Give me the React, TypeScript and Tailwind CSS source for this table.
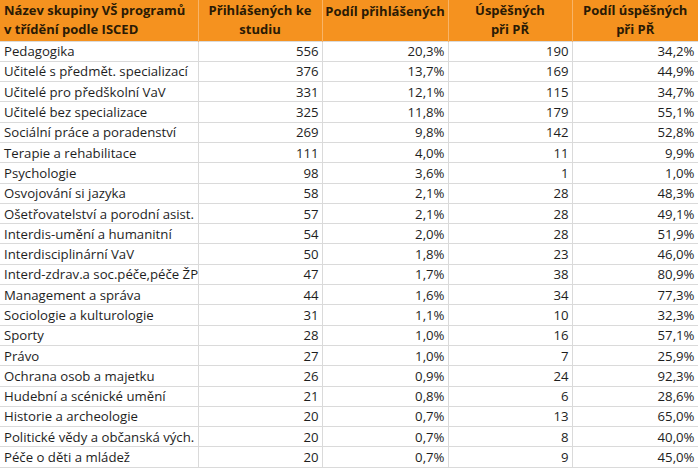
import React from "react";

const rows: [string, string, string, string, string][] = [
  ["Pedagogika", "556", "20,3%", "190", "34,2%"],
  ["Učitelé s předmět. specializací", "376", "13,7%", "169", "44,9%"],
  ["Učitelé pro předškolní VaV", "331", "12,1%", "115", "34,7%"],
  ["Učitelé bez specializace", "325", "11,8%", "179", "55,1%"],
  ["Sociální práce a poradenství", "269", "9,8%", "142", "52,8%"],
  ["Terapie a rehabilitace", "111", "4,0%", "11", "9,9%"],
  ["Psychologie", "98", "3,6%", "1", "1,0%"],
  ["Osvojování si jazyka", "58", "2,1%", "28", "48,3%"],
  ["Ošetřovatelství a porodní asist.", "57", "2,1%", "28", "49,1%"],
  ["Interdis-umění a humanitní", "54", "2,0%", "28", "51,9%"],
  ["Interdisciplinární VaV", "50", "1,8%", "23", "46,0%"],
  ["Interd-zdrav.a soc.péče,péče ŽP", "47", "1,7%", "38", "80,9%"],
  ["Management a správa", "44", "1,6%", "34", "77,3%"],
  ["Sociologie a kulturologie", "31", "1,1%", "10", "32,3%"],
  ["Sporty", "28", "1,0%", "16", "57,1%"],
  ["Právo", "27", "1,0%", "7", "25,9%"],
  ["Ochrana osob a majetku", "26", "0,9%", "24", "92,3%"],
  ["Hudební a scénické umění", "21", "0,8%", "6", "28,6%"],
  ["Historie a archeologie", "20", "0,7%", "13", "65,0%"],
  ["Politické vědy a občanská vých.", "20", "0,7%", "8", "40,0%"],
  ["Péče o děti a mládež", "20", "0,7%", "9", "45,0%"],
];

export default function App() {
  return (
    <div className="w-[698px] h-[469px] bg-white overflow-hidden" style={{ fontFamily: "'Open Sans', 'Noto Sans', sans-serif" }}>
      <table className="border-collapse table-fixed w-[698px] text-[13.2px] text-[#1e1e1e]">
        <colgroup>
          <col className="w-[198px]" />
          <col className="w-[124px]" />
          <col className="w-[126px]" />
          <col className="w-[124px]" />
          <col className="w-[126px]" />
        </colgroup>
        <thead>
          <tr className="h-[41px] bg-[#f5921f] text-[13px] font-bold text-[#2a1a05] leading-[19px]">
            <th className="text-left px-[4px] font-bold border-r border-[#f8b468]">Název skupiny VŠ programů<br />v třídění podle ISCED</th>
            <th className="text-center font-bold border-r border-[#f8b468]">Přihlášených ke<br />studiu</th>
            <th className="text-center align-top pt-[2px] font-bold border-r border-[#f8b468]">Podíl přihlášených</th>
            <th className="text-center font-bold border-r border-[#f8b468]">Úspěšných<br />při PŘ</th>
            <th className="text-center font-bold">Podíl úspěšných<br />při PŘ</th>
          </tr>
        </thead>
        <tbody>
          {rows.map((r, i) => (
            <tr key={i} className="h-[20.3px] leading-[18px]">
              <td className="px-[4px] border border-[#dadada] border-l-0 whitespace-nowrap">{r[0]}</td>
              <td className="px-[3px] text-right border border-[#dadada]">{r[1]}</td>
              <td className="px-[3px] text-right border border-[#dadada]">{r[2]}</td>
              <td className="px-[3px] text-right border border-[#dadada]">{r[3]}</td>
              <td className="px-[3px] text-right border border-[#dadada]">{r[4]}</td>
            </tr>
          ))}
        </tbody>
      </table>
    </div>
  );
}
